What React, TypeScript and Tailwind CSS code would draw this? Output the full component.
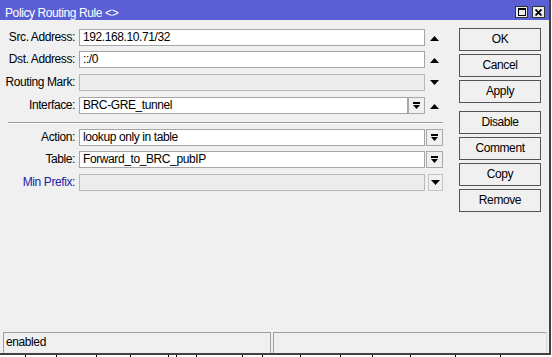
import React from "react";

function UpArrow() {
  return (
    <svg width="9" height="5" viewBox="0 0 9 5">
      <polygon points="0,5 9,5 4.5,0" fill="#000" />
    </svg>
  );
}

function DownArrow() {
  return (
    <svg width="9" height="5" viewBox="0 0 9 5">
      <polygon points="0,0 9,0 4.5,5" fill="#000" />
    </svg>
  );
}

function DropButton(props: { className?: string }) {
  return (
    <div
      className={`flex h-[17px] items-center justify-center border border-[#a9a9a9] bg-[#f0f0f0] ${props.className ?? ""}`}
    >
      <svg width="7" height="7" viewBox="0 0 7 7">
        <rect x="0" y="0" width="7" height="2" fill="#000" />
        <polygon points="0,3 7,3 3.5,7" fill="#000" />
      </svg>
    </div>
  );
}

function Field(props: { value?: string; disabled?: boolean; width: string }) {
  return (
    <div
      className={`h-[17px] truncate border pl-[3px] leading-[15px] ${props.width} ${
        props.disabled ? "border-[#b9b9b9] bg-[#ececec]" : "border-[#a5a5a5] bg-white"
      }`}
    >
      {props.value}
    </div>
  );
}

function Label(props: { text: string; blue?: boolean }) {
  return (
    <div className={`w-[79px] shrink-0 pr-[4px] text-right ${props.blue ? "text-[#1b1ba8]" : ""}`}>
      {props.text}
    </div>
  );
}

function Btn(props: { label: string; className?: string }) {
  return (
    <div
      className={`flex h-[23px] w-[82px] items-center justify-center border border-[#555] bg-[#f0f0f0] ${props.className ?? ""}`}
    >
      {props.label}
    </div>
  );
}

const ticks = [25, 56, 96, 130, 168, 176, 196, 242, 262, 300, 340, 372, 410, 455, 500];

export default function App() {
  return (
    <div className="h-[357px] w-[552px] overflow-hidden bg-white font-['Liberation_Sans',Arial,sans-serif] text-[12px] leading-[17px] tracking-[-0.4px] text-black">
      <div className="flex h-[355px] w-[551px] flex-col border-b-2 border-r-2 border-[#404040] bg-[#f0f0f0]">
        {/* title bar */}
        <div className="flex h-[20px] shrink-0 items-start justify-between bg-[#5b5fd6] pl-[5px] pr-[4px]">
          <div className="pt-[6px] leading-[14px] text-white">Policy Routing Rule &lt;&gt;</div>
          <div className="flex gap-[4px] pt-[6px]">
            <div className="flex h-[12px] w-[13px] items-center justify-center border border-[#333] bg-[#ececec]">
              <div className="h-[8px] w-[8px] border border-t-2 border-black" />
            </div>
            <div className="flex h-[12px] w-[13px] items-center justify-center border border-[#333] bg-[#ececec]">
              <svg width="7" height="7" viewBox="0 0 7 7">
                <path d="M0.5 0.5 L6.5 6.5 M6.5 0.5 L0.5 6.5" stroke="#000" strokeWidth="1.8" />
              </svg>
            </div>
          </div>
        </div>

        {/* content */}
        <div className="flex flex-1 pt-[8px]">
          <div className="flex w-[443px] flex-col pt-[1px]">
            <div className="flex h-[17px] items-center">
              <Label text="Src. Address:" />
              <Field value="192.168.10.71/32" width="w-[346px]" />
              <div className="flex w-[18px] justify-center pt-[2px]">
                <UpArrow />
              </div>
            </div>
            <div className="mt-[5px] flex h-[17px] items-center">
              <Label text="Dst. Address:" />
              <Field value="::/0" width="w-[346px]" />
              <div className="flex w-[18px] justify-center pt-[2px]">
                <UpArrow />
              </div>
            </div>
            <div className="mt-[6px] flex h-[17px] items-center">
              <Label text="Routing Mark:" />
              <Field disabled width="w-[346px]" />
              <div className="flex w-[18px] justify-center">
                <DownArrow />
              </div>
            </div>
            <div className="mt-[6px] flex h-[17px] items-center">
              <Label text="Interface:" />
              <Field value="BRC-GRE_tunnel" width="w-[329px]" />
              <DropButton className="w-[17px]" />
              <div className="flex w-[18px] justify-center pt-[1px]">
                <UpArrow />
              </div>
            </div>

            <div className="ml-[8px] mt-[8px] h-[2px] w-[435px] border-t border-b border-t-[#a0a0a0] border-b-white" />

            <div className="mt-[5px] flex h-[17px] items-center">
              <Label text="Action:" />
              <Field value="lookup only in table" width="w-[346px]" />
              <DropButton className="ml-[1px] w-[17px]" />
            </div>
            <div className="mt-[5px] flex h-[17px] items-center">
              <Label text="Table:" />
              <Field value="Forward_to_BRC_pubIP" width="w-[346px]" />
              <DropButton className="ml-[1px] w-[17px]" />
            </div>
            <div className="mt-[6px] flex h-[17px] items-center">
              <Label text="Min Prefix:" blue />
              <Field disabled width="w-[346px]" />
              <div className="ml-[3px] flex h-[17px] w-[15px] items-center justify-center border border-[#c4c4c4] bg-[#f0f0f0]">
                <DownArrow />
              </div>
            </div>
          </div>

          <div className="ml-[16px] flex flex-col">
            <Btn label="OK" className="border-[#333]" />
            <Btn label="Cancel" className="mt-[3px]" />
            <Btn label="Apply" className="mt-[3px]" />
            <Btn label="Disable" className="mt-[8px]" />
            <Btn label="Comment" className="mt-[3px]" />
            <Btn label="Copy" className="mt-[3px]" />
            <Btn label="Remove" className="mt-[3px]" />
          </div>
        </div>

        {/* status bar */}
        <div className="flex h-[21px] shrink-0">
          <div className="ml-[3px] w-[268px] border-l border-r border-t border-[#a0a0a0] pl-[2px] leading-[19px]">
            enabled
          </div>
          <div className="ml-[2px] w-[274px] border-l border-r border-t border-l-[#a0a0a0] border-r-[#d8d8d8] border-t-[#a0a0a0]" />
        </div>
      </div>

      {/* what lies beneath the window */}
      <div className="flex h-[2px]">
        {ticks.map((x, i) => (
          <div
            key={x}
            className="h-[2px] w-[1px] bg-black"
            style={{ marginLeft: i === 0 ? x : x - ticks[i - 1] - 1 }}
          />
        ))}
      </div>
    </div>
  );
}
